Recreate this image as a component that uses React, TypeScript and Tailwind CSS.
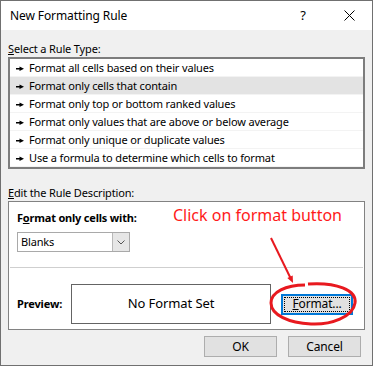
import React from 'react';

const ruleTypes = [
    'Format all cells based on their values',
    'Format only cells that contain',
    'Format only top or bottom ranked values',
    'Format only values that are above or below average',
    'Format only unique or duplicate values',
    'Use a formula to determine which cells to format',
];

const Pointer: React.FC = () => (
    <svg width="8" height="5" viewBox="0 0 8 5" className="shrink-0">
        <rect x="0" y="2" width="4" height="1.5" fill="#000" />
        <polygon points="3.5,0.5 8,2.75 3.5,5" fill="#000" />
    </svg>
);

const Button: React.FC<{ children: React.ReactNode }> = ({ children }) => (
    <button className="w-[73px] h-[21px] bg-[#e1e1e1] border border-[#adadad] flex items-center justify-center text-[12px] leading-none">
        {children}
    </button>
);

export default function App() {
    return (
        <div className="relative w-[373px] h-[366px] border border-[#707070] bg-[#f0f0f0] flex flex-col font-['Noto_Sans',sans-serif] text-[11px] tracking-[-0.15px] text-black overflow-hidden">
            {/* title bar */}
            <div className="h-[29px] bg-white flex items-center pl-[9px] shrink-0">
                <span className="text-[12px] tracking-[-0.1px] flex-1">New Formatting Rule</span>
                <span className="text-[13px] w-[10px] mr-[36px] text-center">?</span>
                <svg width="11" height="11" viewBox="0 0 11 11" className="mr-[17px]">
                    <path d="M0.5 0.5 L10.5 10.5 M10.5 0.5 L0.5 10.5" stroke="#000" strokeWidth="1" />
                </svg>
            </div>

            <div className="flex flex-col pl-[7px] pt-[11px]">
                <div className="h-[15px] leading-[15px]">
                    <u className="underline-offset-[1px]">S</u>elect a Rule Type:
                </div>
                <div className="mt-[1px] w-[357px] h-[112px] border-2 border-[#7d7d7d] bg-white flex flex-col">
                    {ruleTypes.map((t, i) => (
                        <div
                            key={t}
                            className={`h-[18px] flex items-center gap-[5px] pl-[6px] pt-[2px] border-b border-[#f3f3f3] ${i === 1 ? 'bg-[#e3e3e3]' : ''}`}
                        >
                            <Pointer />
                            <span>{t}</span>
                        </div>
                    ))}
                </div>

                <div className="mt-[16px] h-[15px] leading-[15px]">
                    <u className="underline-offset-[1px]">E</u>dit the Rule Description:
                </div>
                <div className="mt-[1px] w-[357px] h-[129px] border border-[#828282] bg-white flex flex-col">
                    <div className="h-[65px] pl-[8px] pt-[8px] flex flex-col">
                        <div className="h-[15px] leading-[15px] font-bold tracking-[-0.2px]">
                            F<u className="underline-offset-[1px]">o</u>rmat only cells with:
                        </div>
                        <div className="mt-[7px] w-[113px] h-[20px] border border-[#a9a9a9] flex items-center">
                            <span className="flex-1 pl-[3px]">Blanks</span>
                            <div className="w-[17px] h-[18px] bg-[#e6e6e6] border-l border-[#b8b8b8] flex items-center justify-center">
                                <svg width="8" height="5" viewBox="0 0 8 5">
                                    <path d="M0.5 0.5 L4 4 L7.5 0.5" stroke="#555" strokeWidth="1" fill="none" />
                                </svg>
                            </div>
                        </div>
                    </div>
                    <div className="h-px bg-[#cfcfcf] mx-[1px]" />
                    <div className="flex items-center pl-[8px] pt-[16px]">
                        <span className="w-[54px] font-bold">Preview:</span>
                        <div className="w-[200px] h-[40px] border border-[#646464] flex items-center justify-center text-[13px] tracking-[-0.1px]">
                            No Format Set
                        </div>
                        <button className="ml-[10px] w-[72px] h-[21px] border-2 border-[#0078d7] bg-[#e1e1e1] p-px">
                            <div className="w-full h-full border border-dotted border-black flex items-center justify-center text-[12px] leading-none">
                                <u className="underline-offset-[1px]">F</u>ormat...
                            </div>
                        </button>
                    </div>
                </div>

                <div className="mt-[6px] flex justify-end gap-[11px] pr-[11px]">
                    <Button>OK</Button>
                    <Button>Cancel</Button>
                </div>
            </div>

            {/* annotation */}
            <div className="absolute left-[172px] top-[203px] text-[16px] leading-[22px] tracking-normal text-[#ff1a1a]">
                Click on format button
            </div>
            <svg className="absolute left-0 top-0 pointer-events-none" width="373" height="366" viewBox="0 0 373 366">
                <line x1="270" y1="237" x2="289.5" y2="277" stroke="#e8191f" strokeWidth="2" />
                <polygon points="292,282 291.7,274.4 286.3,277" fill="#e8191f" />
                <path
                    d="M307 283 C 335 281, 356 289, 354 302 C 352 316, 330 324, 310 323 C 288 322, 270 314, 270 302 C 270 291, 285 284, 304 284"
                    stroke="#e8191f"
                    strokeWidth="3"
                    fill="none"
                />
            </svg>
        </div>
    );
}
